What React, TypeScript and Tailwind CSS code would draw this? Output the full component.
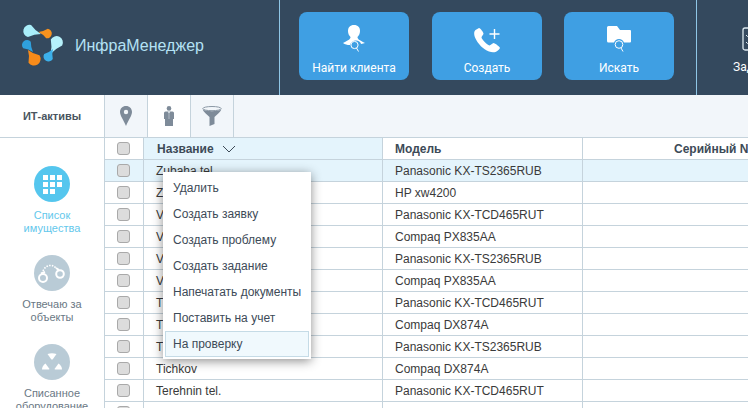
import React from "react";

const rows: [string, string][] = [
  ["Zubaha tel.", "Panasonic KX-TS2365RUB"],
  ["Zubaha", "HP xw4200"],
  ["Vasin tel.", "Panasonic KX-TCD465RUT"],
  ["Vasin", "Compaq PX835AA"],
  ["Volkov tel.", "Panasonic KX-TS2365RUB"],
  ["Volkov", "Compaq PX835AA"],
  ["Tihonov tel.", "Panasonic KX-TCD465RUT"],
  ["Tihonov", "Compaq DX874A"],
  ["Tichkov tel.", "Panasonic KX-TS2365RUB"],
  ["Tichkov", "Compaq DX874A"],
  ["Terehnin tel.", "Panasonic KX-TCD465RUT"],
  ["", ""],
];

const menu = ["Удалить", "Создать заявку", "Создать проблему", "Создать задание", "Напечатать документы", "Поставить на учет", "На проверку"];

function drop(cx: number, cy: number, r: number, tx: number, ty: number) {
  const len = Math.hypot(cx - tx, cy - ty);
  const dx = (cx - tx) / len;
  const dy = (cy - ty) / len;
  const nx = -dy;
  const ny = dx;
  const ax = cx + nx * r;
  const ay = cy + ny * r;
  const bx = cx - nx * r;
  const by = cy - ny * r;
  const k = len * 0.45;
  const f = r * 0.28;
  return `M${tx} ${ty} Q${cx - dx * k + nx * f} ${cy - dy * k + ny * f} ${ax} ${ay} A${r} ${r} 0 1 0 ${bx} ${by} Q${cx - dx * k - nx * f} ${cy - dy * k - ny * f} ${tx} ${ty}Z`;
}

function Logo() {
  return (
    <svg width="46" height="46" viewBox="20 24 46 46" className="shrink-0">
      <path d={drop(29.5, 32, 6.2, 41, 35)} fill="#a9eefa" />
      <path d={drop(47, 34.5, 4.8, 38.5, 33)} fill="#f7921e" />
      <path d={drop(56.5, 43.5, 6.4, 50.5, 55)} fill="#b6f1fb" />
      <path d={drop(48.5, 57.5, 5, 53, 50)} fill="#3cb0ea" />
      <path d={drop(34, 60, 6.6, 28, 51)} fill="#f78b1a" />
      <path d={drop(27, 46, 5, 33, 53)} fill="#2fa0dd" />
    </svg>
  );
}

function UserSearch() {
  return (
    <svg width="22" height="28" viewBox="0 0 22 28">
      <path d="M11 0 C7 0 5 2.5 5 6 C5 8.5 6 10.5 7.5 12 C7.5 14 6 15 0 18 C2 19.5 4 20 7 20 C8 17 10 15.5 13 15.5 C15.5 15.5 17.5 17 18 19 C19.5 18.8 21 18.5 22 18 C16 15 14.5 14 14.5 12 C16 10.5 17 8.5 17 6 C17 2.5 15 0 11 0Z" fill="#fff" />
      <circle cx="11.5" cy="20" r="3.6" fill="none" stroke="#fff" strokeWidth="1" />
      <path d="M13.5 23 L15.5 26.5" stroke="#fff" strokeWidth="1" />
    </svg>
  );
}

function PhonePlus() {
  return (
    <svg width="27" height="25" viewBox="0 0 27 25">
      <path d="M5 0 L1.5 2 C-0.5 4 0 7 1.5 10.5 C4 16 9 21 15 23.5 C19 25 22 24.5 25 21.5 L26 20 C26 19 21 15 19.5 15 C18.5 15 16.5 17.5 15.5 17.5 C13 17 8 11.5 7.5 9.5 C7.5 8 9.5 7 9.5 5.5 C9.5 4.5 6.5 0 5 0Z" fill="#fff" />
      <path d="M20.5 1 V11 M15.5 6 H25.5" stroke="#fff" strokeWidth="1.4" fill="none" />
    </svg>
  );
}

function FolderSearch() {
  return (
    <svg width="24" height="27" viewBox="0 0 24 27">
      <path d="M0 1.5 Q0 0 1.5 0 H10 L13 4 H23 Q24 4 24 5 V15.5 Q24 16.5 23 16.5 H17 C16 14.5 14.5 13 12 13 C9.5 13 8 14.5 7 16.5 H1.5 Q0 16.5 0 15Z" fill="#fff" />
      <circle cx="12" cy="18.5" r="3.8" fill="none" stroke="#fff" strokeWidth="1" />
      <path d="M14 22 L16 25.5" stroke="#fff" strokeWidth="1" />
    </svg>
  );
}

function Clipboard() {
  return (
    <svg width="22" height="26" viewBox="0 0 22 26" fill="none" stroke="#dbe8ef" strokeWidth="1.3">
      <rect x="1" y="3" width="20" height="22" rx="2" />
      <rect x="7" y="1" width="8" height="4" rx="1" fill="#34495e" />
      <path d="M4 10 L5.5 11.5 L8 9 M10 10.5 H18 M4 17 L5.5 18.5 L8 16 M10 17.5 H18" strokeWidth="1" />
    </svg>
  );
}

function Pin() {
  return (
    <svg width="12" height="20" viewBox="0 0 12 20">
      <path fillRule="evenodd" d="M6 0 C2.5 0 0 2.6 0 6 C0 9.5 3.5 14 6 20 C8.5 14 12 9.5 12 6 C12 2.6 9.5 0 6 0Z M6 3.8 A2.2 2.2 0 1 1 6 8.2 A2.2 2.2 0 1 1 6 3.8Z" fill="#7e8b99" />
    </svg>
  );
}

function Person() {
  return (
    <svg width="10" height="20" viewBox="0 0 10 20">
      <circle cx="5" cy="2.4" r="2.3" fill="#7e8b99" />
      <path d="M1.5 5.4 H8.5 Q10 5.4 10 7 V13 H9 V20 H1 V13 H0 V7 Q0 5.4 1.5 5.4Z" fill="#7e8b99" />
      <path d="M3.8 5.4 L5 8 L6.2 5.4Z" fill="#e8eef2" />
      <path d="M5 8 V13" stroke="#e8eef2" strokeWidth="0.5" />
    </svg>
  );
}

function Funnel() {
  return (
    <svg width="20" height="20" viewBox="0 0 20 20">
      <ellipse cx="10" cy="2.6" rx="9.2" ry="2.1" fill="none" stroke="#8b98a5" strokeWidth="1" />
      <path d="M0.6 3.5 C2 6.5 4.5 8 7.5 11 V20 L12.5 18 V11 C15.5 8 18 6.5 19.4 3.5 C15 5.8 5 5.8 0.6 3.5Z" fill="#7e8b99" />
    </svg>
  );
}

function GridIcon() {
  return (
    <svg width="19" height="19" viewBox="0 0 19 19" fill="#fff">
      <rect x="0" y="0" width="5" height="5" /><rect x="7" y="0" width="5" height="5" /><rect x="14" y="0" width="5" height="5" />
      <rect x="0" y="7" width="5" height="5" /><rect x="7" y="7" width="5" height="5" /><rect x="14" y="7" width="5" height="5" />
      <rect x="0" y="14" width="5" height="5" /><rect x="7" y="14" width="5" height="5" />
    </svg>
  );
}

function Cuffs() {
  return (
    <svg width="36" height="36" viewBox="0 0 36 36" fill="none" stroke="#fff">
      <circle cx="9" cy="23" r="4" strokeWidth="2" />
      <circle cx="26" cy="19" r="3.8" strokeWidth="2" />
      <path d="M9 16 C11 11 17 8 22 13" strokeWidth="1.6" strokeDasharray="1.6 1.2" />
      <path d="M7 18.5 L11 17 M22 13 L25 15" strokeWidth="2" />
    </svg>
  );
}

function Radiation() {
  return (
    <svg width="36" height="36" viewBox="0 0 36 36" fill="#fff">
      <path d="M13.5 10 Q18 8.5 22.5 10 L18.6 15.5 H17.4Z" />
      <path d="M8 25.5 Q8 22 11.5 19.5 L15.5 25 L15 25.5 Z" />
      <path d="M28 25.5 Q28 22 24.5 19.5 L20.5 25 L21 25.5 Z" />
    </svg>
  );
}

function Chevron() {
  return (
    <svg width="14" height="8" viewBox="0 0 14 8" fill="none" stroke="#3d4a57" strokeWidth="1">
      <path d="M1 1 L7 7 L13 1" />
    </svg>
  );
}

function HeadButton({ icon, label, extra }: { icon: React.ReactNode; label: string; extra?: string }) {
  return (
    <div className={`flex h-[68px] w-[110px] shrink-0 flex-col items-center rounded-[8px] bg-[#3f9fe3] text-[12px] text-white ${extra ?? ""}`}>
      <div className="flex h-[42px] items-end justify-center pb-px">{icon}</div>
      <div className="mt-[6px] leading-[16px]">{label}</div>
    </div>
  );
}

function Check() {
  return <div className="h-[13px] w-[13px] rounded-[3px] border border-[#a9a9a9] bg-[#dcdcdc]" />;
}

function SideItem({ icon, title, active, circle }: { icon: React.ReactNode; title: React.ReactNode; active?: boolean; circle: string }) {
  return (
    <div className="flex h-[89px] shrink-0 flex-col items-center">
      <div className={`flex h-[36px] w-[36px] items-center justify-center rounded-full ${circle}`}>{icon}</div>
      <div className={`mt-[7px] text-center text-[11px] leading-[13px] ${active ? "text-[#64c8ec]" : "text-[#6a7884]"}`}>{title}</div>
    </div>
  );
}

export default function App() {
  return (
    <div className="relative flex h-[408px] w-[748px] flex-col overflow-hidden bg-white font-['Liberation_Sans',sans-serif] text-[12px] text-[#3a3a3a]">
      <header className="flex h-[95px] shrink-0 bg-[#34495e]">
        <div className="flex w-[280px] shrink-0 items-center gap-[9px] border-r border-[#8fc6e6] pb-[3px] pl-[20px]">
          <Logo />
          <span className="text-[16px] text-[#b4e2f5]">ИнфраМенеджер</span>
        </div>
        <div className="flex w-[417px] shrink-0 items-center gap-[22px] border-r border-[#8fc6e6] pb-[3px] pl-[19px] font-['Roboto',sans-serif]">
          <HeadButton icon={<UserSearch />} label="Найти клиента" />
          <HeadButton icon={<PhonePlus />} label="Создать" extra="ml-px" />
          <HeadButton icon={<FolderSearch />} label="Искать" />
        </div>
        <div className="flex shrink-0 flex-col items-center pl-[36px] pt-[25px] font-['Roboto',sans-serif] text-[12px] text-white">
          <Clipboard />
          <div className="mt-[8px] leading-[16px]">Задачи</div>
        </div>
      </header>

      <div className="flex h-[43px] shrink-0 border-b border-[#c5d3dc] bg-[#f2f6fa]">
        <div className="flex w-[104px] shrink-0 items-center justify-center bg-white text-[11px] font-bold text-[#4a5560]">ИТ-активы</div>
        <div className="flex w-[44px] items-center justify-center border-x border-[#c5d3dc]"><Pin /></div>
        <div className="flex w-[43px] items-center justify-center border-r border-[#c5d3dc] bg-white"><Person /></div>
        <div className="flex w-[43px] items-center justify-center border-r border-[#c5d3dc]"><Funnel /></div>
      </div>

      <div className="flex min-h-0 flex-1">
        <aside className="flex w-[104px] shrink-0 flex-col pt-[28px]">
          <SideItem active circle="bg-[#55c6ee]" icon={<GridIcon />} title={<>Список<br />имущества</>} />
          <SideItem circle="bg-[#b9cbd6]" icon={<Cuffs />} title={<>Отвечаю за<br />объекты</>} />
          <SideItem circle="bg-[#b9cbd6]" icon={<Radiation />} title={<>Списанное<br />оборудование</>} />
        </aside>
        <div className="min-w-0 flex-1">
          <div className="flex h-[22px] border-b border-[#c5d3dc] font-bold text-[#3d4a57]">
            <div className="flex w-[40px] shrink-0 items-center justify-center border-x border-[#c5d3dc] pr-px"><Check /></div>
            <div className="flex w-[239px] shrink-0 items-center gap-[8px] border-r border-[#c5d3dc] bg-[#e4f4fc] pl-[13px]">Название <Chevron /></div>
            <div className="flex w-[200px] shrink-0 items-center border-r border-[#c5d3dc] pl-[12px]">Модель</div>
            <div className="flex shrink-0 items-center whitespace-nowrap pl-[91px]">Серийный No</div>
          </div>
          {rows.map(([name, model], i) => (
            <div key={i} className={`flex h-[22px] border-b border-[#c5d3dc] ${i === 0 ? "bg-[#e4f4fc]" : ""}`}>
              <div className="flex w-[40px] shrink-0 items-center justify-center border-x border-[#c5d3dc] pr-px"><Check /></div>
              <div className="flex w-[239px] shrink-0 items-center border-r border-[#c5d3dc] pl-[12px]">{name}</div>
              <div className="flex w-[200px] shrink-0 items-center border-r border-[#c5d3dc] pl-[12px]">{model}</div>
            </div>
          ))}
        </div>
      </div>

      <div className="absolute left-[163px] top-[172px] w-[148px] bg-white pb-[2px] pl-[2px] pr-[2px] pt-[3px] shadow-[0_2px_10px_rgba(0,0,0,0.45)]">
        {menu.map((m, i) => (
          <div key={m} className={`flex h-[26px] items-center text-[#3d4a57] ${i === 6 ? "border border-[#c5dbe6] bg-[#f0f9fd] pl-[7px]" : "pl-[8px]"}`}>{m}</div>
        ))}
      </div>
    </div>
  );
}
